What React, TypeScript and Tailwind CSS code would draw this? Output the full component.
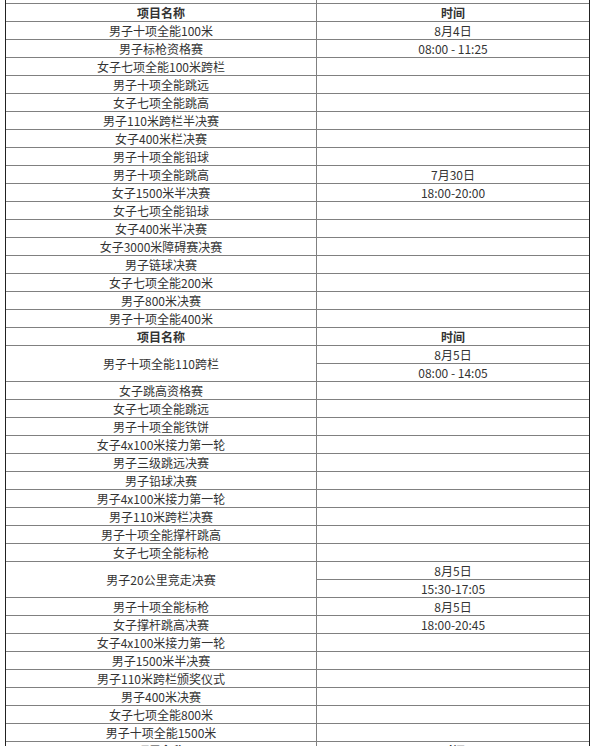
const rowsA: [string, string][] = [
  ["男子十项全能100米", "8月4日"],
  ["男子标枪资格赛", "08:00 - 11:25"],
  ["女子七项全能100米跨栏", ""],
  ["男子十项全能跳远", ""],
  ["女子七项全能跳高", ""],
  ["男子110米跨栏半决赛", ""],
  ["女子400米栏决赛", ""],
  ["男子十项全能铅球", ""],
  ["男子十项全能跳高", "7月30日"],
  ["女子1500米半决赛", "18:00-20:00"],
  ["女子七项全能铅球", ""],
  ["女子400米半决赛", ""],
  ["女子3000米障碍赛决赛", ""],
  ["男子链球决赛", ""],
  ["女子七项全能200米", ""],
  ["男子800米决赛", ""],
  ["男子十项全能400米", ""],
];

const rowsB1: [string, string][] = [
  ["女子跳高资格赛", ""],
  ["女子七项全能跳远", ""],
  ["男子十项全能铁饼", ""],
  ["女子4x100米接力第一轮", ""],
  ["男子三级跳远决赛", ""],
  ["男子铅球决赛", ""],
  ["男子4x100米接力第一轮", ""],
  ["男子110米跨栏决赛", ""],
  ["男子十项全能撑杆跳高", ""],
  ["女子七项全能标枪", ""],
];

const rowsB2: [string, string][] = [
  ["男子十项全能标枪", "8月5日"],
  ["女子撑杆跳高决赛", "18:00-20:45"],
  ["女子4x100米接力第一轮", ""],
  ["男子1500米半决赛", ""],
  ["男子110米跨栏颁奖仪式", ""],
  ["男子400米决赛", ""],
  ["女子七项全能800米", ""],
  ["男子十项全能1500米", ""],
];

function Row({ name, time, bold }: { name: string; time: string; bold?: boolean }) {
  return (
    <div className={`flex h-[18px] border-b border-[#808080] ${bold ? "font-bold" : ""}`}>
      <div className="w-[311px] border-r border-[#808080] text-center leading-[17px]">{name}</div>
      <div className="flex-1 text-center leading-[17px]">{time}</div>
    </div>
  );
}

function SpanRow({ name, date, time }: { name: string; date: string; time: string }) {
  return (
    <div className="flex h-[36px] border-b border-[#808080]">
      <div className="w-[311px] border-r border-[#808080] flex items-center justify-center">{name}</div>
      <div className="flex-1 flex flex-col">
        <div className="h-[18px] border-b border-[#808080] text-center leading-[17px]">{date}</div>
        <div className="h-[17px] text-center leading-[17px]">{time}</div>
      </div>
    </div>
  );
}

export default function App() {
  return (
    <div className="w-[597px] h-[746px] overflow-hidden bg-white">
      <div
        className="ml-[5px] w-[585px] -mt-[14px] border-x border-[#222] text-[12px] text-[#333]"
        style={{ fontFamily: '"Noto Sans CJK SC", "Liberation Sans", sans-serif' }}
      >
        <Row name="" time="" />
        <Row name="项目名称" time="时间" bold />
        {rowsA.map(([n, t], i) => (
          <Row key={"a" + i} name={n} time={t} />
        ))}
        <Row name="项目名称" time="时间" bold />
        <SpanRow name="男子十项全能110跨栏" date="8月5日" time="08:00 - 14:05" />
        {rowsB1.map(([n, t], i) => (
          <Row key={"b" + i} name={n} time={t} />
        ))}
        <SpanRow name="男子20公里竞走决赛" date="8月5日" time="15:30-17:05" />
        {rowsB2.map(([n, t], i) => (
          <Row key={"c" + i} name={n} time={t} />
        ))}
        <Row name="项目名称" time="时间" bold />
      </div>
    </div>
  );
}
